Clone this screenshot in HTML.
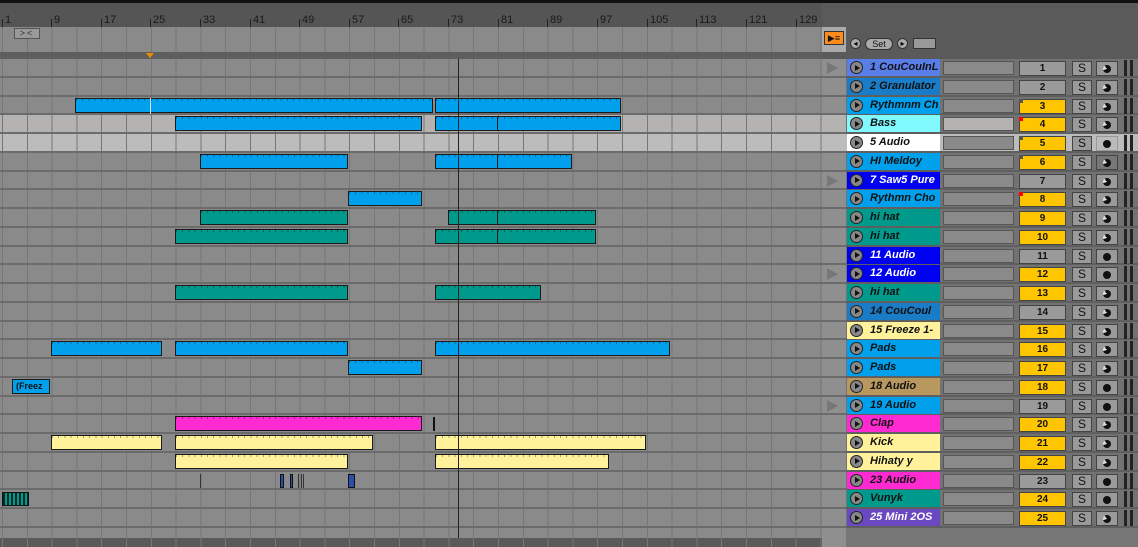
<!DOCTYPE html>
<html><head><meta charset="utf-8"><style>
*{margin:0;padding:0;box-sizing:border-box}
body{width:1138px;height:538px;overflow:hidden;background:#5a5a5a;font-family:"Liberation Sans",sans-serif;position:relative}
.a{position:absolute}
#top{left:0;top:0;width:1138px;height:3px;background:#111}
#ruler{left:0;top:3px;width:822px;height:24px;background:#555}
#ruler span{position:absolute;top:11px;font-size:11px;color:#1a1a1a}
#ruler i{position:absolute;top:16px;width:1px;height:8px;background:#222}
#loop{left:0;top:27px;width:822px;height:25px;background:#8a8a8a repeating-linear-gradient(90deg,#777 0 1px,transparent 1px 24.8px);background-position:2px 0}
#strip{left:0;top:52px;width:822px;height:7px;background:#5e5e5e}
#arr{left:0;top:59px;width:1138px;height:479px;background:#8a8a8a}
.r{position:absolute;left:0;width:1138px;height:18.75px}
.bg{position:absolute;left:0;top:0;width:822px;height:18.75px;border-bottom:2px solid #6b6b6b;background-image:repeating-linear-gradient(90deg,#777 0 1px,transparent 1px 24.8px);background-position:2px 0}
.c{position:absolute;top:1px;height:15px;border:1px solid #1a1a1a;background-image:repeating-linear-gradient(90deg,rgba(0,0,0,.35) 0 1px,transparent 1px 6.2px);background-size:100% 2px;background-repeat:repeat-x}
.b{background-color:#00a0ec}.t{background-color:#009a8c}.m{background-color:#ff2ad2}.y{background-color:#fff29a}
.col{position:absolute;left:822px;top:0;width:24px;height:18.75px;background:#8f8f8f;border-bottom:2px solid #6b6b6b}
.hd{position:absolute;left:846px;top:0;width:292px;height:18.75px;background:#727272;border-bottom:2px solid #5f5f5f}
.nm{position:absolute;left:847px;top:0;width:93px;height:17px}
.nm b{position:absolute;left:23px;top:2px;font-size:11px;font-style:italic;font-weight:bold;white-space:nowrap;color:#111}
.pl{position:absolute;left:3px;top:2px;width:13px;height:13px;border-radius:50%;background:#888;border:1px solid #222}
.pl:after{content:"";position:absolute;left:4px;top:2.5px;border-left:5px solid #111;border-top:3.5px solid transparent;border-bottom:3.5px solid transparent}
.sl{position:absolute;left:943px;top:2px;width:71px;height:14px;background:#8a8a8a;border:1px solid #555}
.n{position:absolute;left:1019px;top:2px;width:47px;height:15px;border:1px solid #444;font-size:10px;font-weight:bold;text-align:center;line-height:13px;color:#111;background:#9a9a9a}
.n.yl{background:#ffc600}
.s{position:absolute;left:1072px;top:2px;width:20px;height:15px;border:1px solid #444;background:#9a9a9a;font-size:12px;text-align:center;line-height:13px;color:#111}
.rc{position:absolute;left:1096px;top:2px;width:22px;height:15px;border:1px solid #444;background:#9a9a9a}
.rc:after{content:"";position:absolute;left:6px;top:3px;width:8px;height:8px;border-radius:50%;background:#111}
.rc.h:after{background:conic-gradient(#111 0 70%,#ddd 70% 90%,#111 90%)}
.mt{position:absolute;left:1124px;top:1px;width:3px;height:16px;background:#222;box-shadow:6px 0 0 #222}
.tri{position:absolute;left:827px;top:3px;border-left:11px solid #777;border-top:6px solid transparent;border-bottom:6px solid transparent}
.w b{color:#fff}
.fl{position:absolute;left:1019px;top:2px;width:4px;height:4px;background:#555}
.fl.red{background:#f00}
</style></head><body>
<div id="top" class="a"></div>
<div id="ruler" class="a">
<i style="left:2px"></i><span style="left:5px">1</span>
<i style="left:51px"></i><span style="left:54px">9</span>
<i style="left:101px"></i><span style="left:104px">17</span>
<i style="left:150px"></i><span style="left:153px">25</span>
<i style="left:200px"></i><span style="left:203px">33</span>
<i style="left:250px"></i><span style="left:253px">41</span>
<i style="left:299px"></i><span style="left:302px">49</span>
<i style="left:349px"></i><span style="left:352px">57</span>
<i style="left:398px"></i><span style="left:401px">65</span>
<i style="left:448px"></i><span style="left:451px">73</span>
<i style="left:498px"></i><span style="left:501px">81</span>
<i style="left:547px"></i><span style="left:550px">89</span>
<i style="left:597px"></i><span style="left:600px">97</span>
<i style="left:647px"></i><span style="left:650px">105</span>
<i style="left:696px"></i><span style="left:699px">113</span>
<i style="left:746px"></i><span style="left:749px">121</span>
<i style="left:796px"></i><span style="left:799px">129</span>
</div>
<div class="a" style="left:822px;top:3px;width:316px;height:56px;background:#5a5a5a"></div>
<div id="loop" class="a"></div>
<div class="a" style="left:14px;top:28px;width:26px;height:11px;border:1px solid #555;background:#999;font-size:9px;line-height:9px;color:#333;letter-spacing:2px;text-align:center">&gt;&lt;</div>
<div class="a" style="left:822px;top:27px;width:24px;height:25px;background:#aaa"></div>
<div class="a" style="left:824px;top:31px;width:20px;height:14px;background:#ff8c1a;border:1px solid #333;font-size:9px;line-height:12px;color:#111;text-align:center">▶≡</div>
<div class="a" style="left:850px;top:38px;width:11px;height:11px;border-radius:50%;background:#aaa;border:1px solid #333;font-size:8px;line-height:9px;text-align:center">◂</div>
<div class="a" style="left:865px;top:38px;width:28px;height:12px;border-radius:6px;background:#aaa;border:1px solid #333;font-size:9px;line-height:10px;text-align:center;color:#111">Set</div>
<div class="a" style="left:897px;top:38px;width:11px;height:11px;border-radius:50%;background:#aaa;border:1px solid #333;font-size:8px;line-height:9px;text-align:center">▸</div>
<div class="a" style="left:913px;top:38px;width:23px;height:11px;background:#999;border:1px solid #333"></div>
<div id="strip" class="a"></div>
<div class="a" style="left:146px;top:53px;border-top:5px solid #f08a00;border-left:4px solid transparent;border-right:4px solid transparent"></div>
<div id="arr" class="a">
<div class="r" style="top:0"><div class="bg"></div><div class="col"></div><div class="tri"></div><div class="hd"></div><div class="nm" style="background:#5a7ee8"><div class="pl"></div><b>1 CouCouInL</b></div><div class="sl"></div><div class="n">1</div><div class="s">S</div><div class="rc h"></div><div class="mt"></div></div>
<div class="r" style="top:18.75px"><div class="bg"></div><div class="col"></div><div class="hd"></div><div class="nm" style="background:#1a7cc6"><div class="pl"></div><b>2 Granulator</b></div><div class="sl"></div><div class="n">2</div><div class="s">S</div><div class="rc h"></div><div class="mt"></div></div>
<div class="r" style="top:37.5px"><div class="bg"></div><div class="c b" style="left:75px;width:358px"></div><div class="a" style="left:150px;top:1px;width:1px;height:16px;background:#ddd"></div><div class="c b" style="left:435px;width:186px"></div><div class="col"></div><div class="hd"></div><div class="nm" style="background:#00a0ec"><div class="pl"></div><b>Rythmnm Ch</b></div><div class="sl"></div><div class="n yl">3</div><div class="fl"></div><div class="s">S</div><div class="rc h"></div><div class="mt"></div></div>
<div class="r" style="top:56.25px"><div class="bg" style="background-color:#b5b2b2"></div><div class="c b" style="left:175px;width:247px"></div><div class="c b" style="left:435px;width:63px"></div><div class="c b" style="left:497px;width:124px"></div><div class="col" style="background:#b5b2b2"></div><div class="hd"></div><div class="nm" style="background:#80faff"><div class="pl"></div><b>Bass</b></div><div class="sl" style="background:#b5b2b2"></div><div class="n yl">4</div><div class="fl red"></div><div class="s">S</div><div class="rc h"></div><div class="mt"></div></div>
<div class="r" style="top:75px"><div class="bg" style="background-color:#bcbcbc"></div><div class="col" style="background:#bcbcbc"></div><div class="hd" style="background:#bcbcbc"></div><div class="nm" style="background:#fff"><div class="pl"></div><b>5 Audio</b></div><div class="sl"></div><div class="n yl">5</div><div class="fl"></div><div class="s">S</div><div class="rc" style="background:#bbb;border-color:#999"></div><div class="mt"></div></div>
<div class="r" style="top:93.75px"><div class="bg"></div><div class="c b" style="left:200px;width:148px"></div><div class="c b" style="left:435px;width:63px"></div><div class="c b" style="left:497px;width:75px"></div><div class="col"></div><div class="hd"></div><div class="nm" style="background:#00a0ec"><div class="pl"></div><b>HI Meldoy</b></div><div class="sl"></div><div class="n yl">6</div><div class="fl"></div><div class="s">S</div><div class="rc h" style="background:#777"></div><div class="mt"></div></div>
<div class="r" style="top:112.5px"><div class="bg"></div><div class="col"></div><div class="tri"></div><div class="hd"></div><div class="nm w" style="background:#0000f0"><div class="pl"></div><b>7 Saw5 Pure</b></div><div class="sl"></div><div class="n">7</div><div class="s">S</div><div class="rc h"></div><div class="mt"></div></div>
<div class="r" style="top:131.25px"><div class="bg"></div><div class="c b" style="left:348px;width:74px"></div><div class="col"></div><div class="hd"></div><div class="nm" style="background:#00a0ec"><div class="pl"></div><b>Rythmn Cho</b></div><div class="sl"></div><div class="n yl">8</div><div class="fl red"></div><div class="s">S</div><div class="rc h"></div><div class="mt"></div></div>
<div class="r" style="top:150px"><div class="bg"></div><div class="c t" style="left:200px;width:148px"></div><div class="c t" style="left:448px;width:50px"></div><div class="c t" style="left:497px;width:99px"></div><div class="col"></div><div class="hd"></div><div class="nm" style="background:#009a8c"><div class="pl"></div><b>hi hat</b></div><div class="sl"></div><div class="n yl">9</div><div class="s">S</div><div class="rc h"></div><div class="mt"></div></div>
<div class="r" style="top:168.75px"><div class="bg"></div><div class="c t" style="left:175px;width:173px"></div><div class="c t" style="left:435px;width:63px"></div><div class="c t" style="left:497px;width:99px"></div><div class="col"></div><div class="hd"></div><div class="nm" style="background:#009a8c"><div class="pl"></div><b>hi hat</b></div><div class="sl"></div><div class="n yl">10</div><div class="s">S</div><div class="rc h"></div><div class="mt"></div></div>
<div class="r" style="top:187.5px"><div class="bg"></div><div class="col"></div><div class="hd"></div><div class="nm w" style="background:#0000f0"><div class="pl"></div><b>11 Audio</b></div><div class="sl"></div><div class="n">11</div><div class="s">S</div><div class="rc"></div><div class="mt"></div></div>
<div class="r" style="top:206.25px"><div class="bg"></div><div class="col"></div><div class="tri"></div><div class="hd"></div><div class="nm w" style="background:#0000f0"><div class="pl"></div><b>12 Audio</b></div><div class="sl"></div><div class="n yl">12</div><div class="s">S</div><div class="rc"></div><div class="mt"></div></div>
<div class="r" style="top:225px"><div class="bg"></div><div class="c t" style="left:175px;width:173px"></div><div class="c t" style="left:435px;width:106px"></div><div class="col"></div><div class="hd"></div><div class="nm" style="background:#009a8c"><div class="pl"></div><b>hi hat</b></div><div class="sl"></div><div class="n yl">13</div><div class="s">S</div><div class="rc h"></div><div class="mt"></div></div>
<div class="r" style="top:243.75px"><div class="bg"></div><div class="col"></div><div class="hd"></div><div class="nm" style="background:#1a7cc6"><div class="pl"></div><b>14 CouCoul</b></div><div class="sl"></div><div class="n">14</div><div class="s">S</div><div class="rc h"></div><div class="mt"></div></div>
<div class="r" style="top:262.5px"><div class="bg"></div><div class="col"></div><div class="hd"></div><div class="nm" style="background:#fff29a"><div class="pl"></div><b>15 Freeze 1-</b></div><div class="sl"></div><div class="n yl">15</div><div class="s">S</div><div class="rc h"></div><div class="mt"></div></div>
<div class="r" style="top:281.25px"><div class="bg"></div><div class="c b" style="left:51px;width:111px"></div><div class="c b" style="left:175px;width:173px"></div><div class="c b" style="left:435px;width:235px"></div><div class="col"></div><div class="hd"></div><div class="nm" style="background:#00a0ec"><div class="pl"></div><b>Pads</b></div><div class="sl"></div><div class="n yl">16</div><div class="s">S</div><div class="rc h"></div><div class="mt"></div></div>
<div class="r" style="top:300px"><div class="bg"></div><div class="c b" style="left:348px;width:74px"></div><div class="col"></div><div class="hd"></div><div class="nm" style="background:#00a0ec"><div class="pl"></div><b>Pads</b></div><div class="sl"></div><div class="n yl">17</div><div class="s">S</div><div class="rc h"></div><div class="mt"></div></div>
<div class="r" style="top:318.75px"><div class="bg"></div><div class="c b" style="left:12px;width:38px;font-size:9px;font-weight:bold;line-height:13px;padding-left:3px;color:#111;background-image:none">(Freez</div><div class="col"></div><div class="hd"></div><div class="nm" style="background:#b8985e"><div class="pl"></div><b>18 Audio</b></div><div class="sl"></div><div class="n yl">18</div><div class="s">S</div><div class="rc"></div><div class="mt"></div></div>
<div class="r" style="top:337.5px"><div class="bg"></div><div class="col"></div><div class="tri"></div><div class="hd"></div><div class="nm" style="background:#00a0ec"><div class="pl"></div><b>19 Audio</b></div><div class="sl"></div><div class="n">19</div><div class="s">S</div><div class="rc"></div><div class="mt"></div></div>
<div class="r" style="top:356.25px"><div class="bg"></div><div class="c m" style="left:175px;width:247px"></div><div class="a" style="left:433px;top:2px;width:2px;height:14px;background:#111"></div><div class="col"></div><div class="hd"></div><div class="nm" style="background:#ff2ad2"><div class="pl"></div><b>Clap</b></div><div class="sl"></div><div class="n yl">20</div><div class="s">S</div><div class="rc h"></div><div class="mt"></div></div>
<div class="r" style="top:375px"><div class="bg"></div><div class="c y" style="left:51px;width:111px"></div><div class="c y" style="left:175px;width:198px"></div><div class="c y" style="left:435px;width:211px"></div><div class="col"></div><div class="hd"></div><div class="nm" style="background:#fff29a"><div class="pl"></div><b>Kick</b></div><div class="sl"></div><div class="n yl">21</div><div class="s">S</div><div class="rc h"></div><div class="mt"></div></div>
<div class="r" style="top:393.75px"><div class="bg"></div><div class="c y" style="left:175px;width:173px"></div><div class="c y" style="left:435px;width:174px"></div><div class="col"></div><div class="hd"></div><div class="nm" style="background:#fff29a"><div class="pl"></div><b>Hihaty y</b></div><div class="sl"></div><div class="n yl">22</div><div class="s">S</div><div class="rc h"></div><div class="mt"></div></div>
<div class="r" style="top:412.5px"><div class="bg"></div><div class="a" style="left:200px;top:2px;width:1px;height:14px;background:#333"></div><div class="a" style="left:280px;top:2px;width:4px;height:14px;background:#2a4fa8;border:1px solid #111"></div><div class="a" style="left:290px;top:2px;width:3px;height:14px;background:#2a4fa8;border:1px solid #111"></div><div class="a" style="left:298px;top:2px;width:6px;height:14px;border-left:1px solid #333;border-right:1px solid #333;background:linear-gradient(90deg,transparent 2px,#333 2px 3px,transparent 3px)"></div><div class="a" style="left:348px;top:2px;width:7px;height:14px;background:#2a4fa8;border:1px solid #111"></div><div class="col"></div><div class="hd"></div><div class="nm" style="background:#ff2ad2"><div class="pl"></div><b>23 Audio</b></div><div class="sl"></div><div class="n">23</div><div class="s">S</div><div class="rc"></div><div class="mt"></div></div>
<div class="r" style="top:431.25px"><div class="bg"></div><div class="a" style="left:2px;top:2px;width:27px;height:14px;background:#009a8c repeating-linear-gradient(90deg,#0a2a2a 0 2px,transparent 2px 4px);border:1px solid #111"></div><div class="col"></div><div class="hd"></div><div class="nm" style="background:#009a8c"><div class="pl"></div><b>Vunyk</b></div><div class="sl"></div><div class="n yl">24</div><div class="s">S</div><div class="rc"></div><div class="mt"></div></div>
<div class="r" style="top:450px"><div class="bg"></div><div class="col"></div><div class="hd"></div><div class="nm w" style="background:#6a48c0"><div class="pl"></div><b>25 Mini 2OS</b></div><div class="sl"></div><div class="n yl">25</div><div class="s">S</div><div class="rc h"></div><div class="mt"></div></div>
<div class="r" style="top:468.75px"><div class="bg" style="border:0"></div><div class="col" style="border:0"></div><div class="hd" style="border:0;background:#777"></div></div>
<div class="a" style="left:458px;top:0;width:1px;height:479px;background:#222"></div>
</div>
</body></html>
